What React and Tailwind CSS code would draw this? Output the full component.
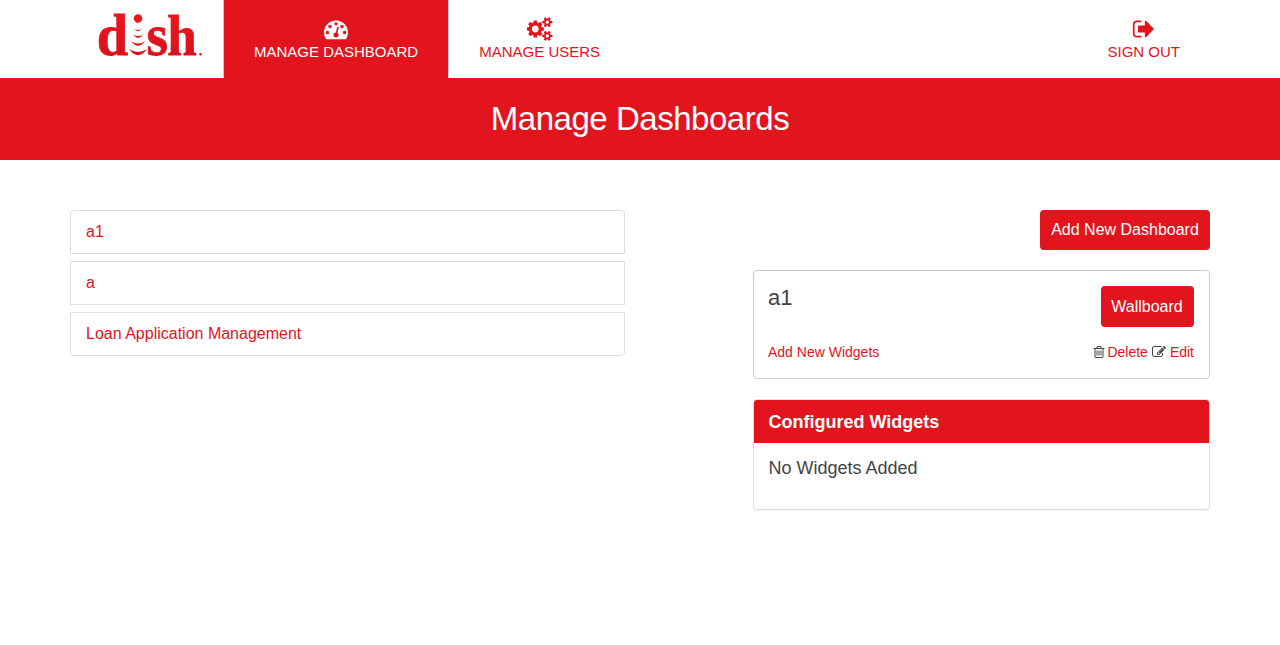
const PATHS = {
  tachometer:
    "M384 1152q0-53-37.5-90.5t-90.5-37.5-90.5 37.5-37.5 90.5 37.5 90.5 90.5 37.5 90.5-37.5 37.5-90.5zm192-448q0-53-37.5-90.5t-90.5-37.5-90.5 37.5-37.5 90.5 37.5 90.5 90.5 37.5 90.5-37.5 37.5-90.5zm428 481l101-382q6-26-7.5-48.5t-38.5-29.5-48 6.5-30 39.5l-101 382q-60 5-107 43.5t-63 98.5q-20 77 20 146t117 89 146-20 89-117q16-60-6-117t-72-91zm660-33q0-53-37.5-90.5t-90.5-37.5-90.5 37.5-37.5 90.5 37.5 90.5 90.5 37.5 90.5-37.5 37.5-90.5zm-640-640q0-53-37.5-90.5t-90.5-37.5-90.5 37.5-37.5 90.5 37.5 90.5 90.5 37.5 90.5-37.5 37.5-90.5zm448 192q0-53-37.5-90.5t-90.5-37.5-90.5 37.5-37.5 90.5 37.5 90.5 90.5 37.5 90.5-37.5 37.5-90.5zm320 448q0 261-141 483-19 29-54 29h-1402q-35 0-54-29-141-221-141-483 0-182 71-348t191-286 286-191 348-71 348 71 286 191 191 286 71 348z",
  cogs:
    "M832 896q0-106-75-181t-181-75-181 75-75 181 75 181 181 75 181-75 75-181zm768 512q0-52-38-90t-90-38-90 38-38 90q0 53 37.5 90.5t90.5 37.5 90.5-37.5 37.5-90.5zm0-1024q0-52-38-90t-90-38-90 38-38 90q0 53 37.5 90.5t90.5 37.5 90.5-37.5 37.5-90.5zm-384 421v185q0 10-7 19.5t-16 10.5l-155 24q-11 35-32 76 34 48 90 115 7 11 7 20 0 12-7 19-23 30-82.5 89.5t-78.5 59.5q-11 0-21-7l-115-90q-37 19-77 31-11 108-23 155-7 24-30 24h-186q-11 0-20-7.5t-10-17.5l-23-153q-34-10-75-31l-118 89q-7 7-20 7-11 0-21-8-144-133-144-160 0-9 7-19 10-14 41-53t47-61q-23-44-35-82l-152-24q-10-1-17-9.5t-7-19.5v-185q0-10 7-19.5t16-10.5l155-24q11-35 32-76-34-48-90-115-7-11-7-20 0-12 7-20 22-30 82-89t79-59q11 0 21 7l115 90q34-18 77-32 11-108 23-154 7-24 30-24h186q11 0 20 7.5t10 17.5l23 153q34 10 75 31l118-89q8-7 20-7 11 0 21 8 144 133 144 160 0 8-7 19-12 16-42 54t-45 60q23 48 34 82l152 23q10 2 17 10.5t7 19.5zm640 533v140q0 16-149 31-12 27-30 52 51 113 51 138 0 4-4 7-122 71-124 71-8 0-46-47t-52-68q-20 2-30 2t-30-2q-14 21-52 68t-46 47q-2 0-124-71-4-3-4-7 0-25 51-138-18-25-30-52-149-15-149-31v-140q0-16 149-31 13-29 30-52-51-113-51-138 0-4 4-7 4-2 35-20t59-34 30-16q8 0 46 46.5t52 67.5q20-2 30-2t30 2q51-71 92-112l6-2q4 0 124 70 4 3 4 7 0 25-51 138 17 23 30 52 149 15 149 31zm0-1024v140q0 16-149 31-12 27-30 52 51 113 51 138 0 4-4 7-122 71-124 71-8 0-46-47t-52-68q-20 2-30 2t-30-2q-14 21-52 68t-46 47q-2 0-124-71-4-3-4-7 0-25 51-138-18-25-30-52-149-15-149-31v-140q0-16 149-31 13-29 30-52-51-113-51-138 0-4 4-7 4-2 35-20t59-34 30-16q8 0 46 46.5t52 67.5q20-2 30-2t30 2q51-71 92-112l6-2q4 0 124 70 4 3 4 7 0 25-51 138 17 23 30 52 149 15 149 31z",
  signOut:
    "M704 1440q0 4 1 20t.5 26.5-3 23.5-10 19.5-20.5 6.5h-320q-119 0-203.5-84.5t-84.5-203.5v-704q0-119 84.5-203.5t203.5-84.5h320q13 0 22.5 9.5t9.5 22.5q0 4 1 20t.5 26.5-3 23.5-10 19.5-20.5 6.5h-320q-66 0-113 47t-47 113v704q0 66 47 113t113 47h312l11.5 1 11.5 3 8 5.5 7 9 2 13.5zm928-544q0 26-19 45l-544 544q-19 19-45 19t-45-19-19-45v-288h-448q-26 0-45-19t-19-45v-384q0-26 19-45t45-19h448v-288q0-26 19-45t45-19 45 19l544 544q19 19 19 45z",
  trash:
    "M704 736v576q0 14-9 23t-23 9h-64q-14 0-23-9t-9-23v-576q0-14 9-23t23-9h64q14 0 23 9t9 23zm256 0v576q0 14-9 23t-23 9h-64q-14 0-23-9t-9-23v-576q0-14 9-23t23-9h64q14 0 23 9t9 23zm256 0v576q0 14-9 23t-23 9h-64q-14 0-23-9t-9-23v-576q0-14 9-23t23-9h64q14 0 23 9t9 23zm128 724v-948h-896v948q0 22 7 40.5t14.5 27 10.5 8.5h832q3 0 10.5-8.5t14.5-27 7-40.5zm-672-1076h448l-48-117q-7-9-17-11h-317q-10 2-17 11zm928 32v64q0 14-9 23t-23 9h-96v948q0 83-47 143.5t-113 60.5h-832q-66 0-113-58.5t-47-141.5v-952h-96q-14 0-23-9t-9-23v-64q0-14 9-23t23-9h309l70-167q15-37 54-63t79-26h320q40 0 79 26t54 63l70 167h309q14 0 23 9t9 23z",
  edit:
    "M888 1184l116-116-152-152-116 116v56h96v96h56zm440-720q-16-16-33 1l-350 350q-17 17-1 33t33-1l350-350q17-17 1-33zm80 594v190q0 119-84.5 203.5t-203.5 84.5h-832q-119 0-203.5-84.5t-84.5-203.5v-832q0-119 84.5-203.5t203.5-84.5h832q63 0 117 25 15 7 18 23 3 17-9 29l-49 49q-14 14-32 8-23-6-45-6h-832q-66 0-113 47t-47 113v832q0 66 47 113t113 47h832q66 0 113-47t47-113v-126q0-13 9-22l64-64q15-15 35-7t20 29zm-96-738l288 288-672 672h-288v-288zm444 132l-92 92-288-288 92-92q28-28 68-28t68 28l152 152q28 28 28 68t-28 68z",
};

function Icon({ name, viewBox = "0 0 1792 1792", className }) {
  return (
    <svg viewBox={viewBox} fill="currentColor" className={className} aria-hidden="true">
      <path d={PATHS[name]} />
    </svg>
  );
}

function Logo() {
  return (
    <svg viewBox="0 0 106 46" className="h-[46px] w-[106px] overflow-visible" aria-label="dish">
      <defs>
        <linearGradient id="logoRed" gradientUnits="userSpaceOnUse" x1="0" y1="2" x2="0" y2="45">
          <stop offset="0" stopColor="#f0141e" />
          <stop offset="1" stopColor="#d2141e" />
        </linearGradient>
      </defs>
      <g fill="url(#logoRed)" className="font-['Liberation_Serif',serif] font-bold">
        <g stroke="#e2141e" strokeWidth="0.8">
          <text x="-1.3" y="43.2" fontSize="60" textLength="31.5" lengthAdjust="spacingAndGlyphs">d</text>
          <text x="48.5" y="43.2" fontSize="60" textLength="21.5" lengthAdjust="spacingAndGlyphs">s</text>
          <text x="69.2" y="43.2" fontSize="57" textLength="29.5" lengthAdjust="spacingAndGlyphs">h</text>
        </g>
        <circle cx="40" cy="6.5" r="4.2" />
        <path d="M36.5 17Q40 19 43.5 17Q40 21.5 36.500 17Z" />
        <path d="M35 22.5Q40 25.5 45 22.5Q40 29.5 35 22.5Z" />
        <path d="M33 29Q40 34 47 29Q40 38.5 33 29Z" />
        <path d="M31 37Q40 43 49 37Q40 49.500 31 37Z" />
        <circle cx="102.5" cy="42.3" r="1.2" />
      </g>
    </svg>
  );
}

function NavItem({ icon, label, active, viewBox, iconClass }) {
  return (
    <a
      className={
        active
          ? "flex h-[78px] flex-col items-center border-x border-[#ccc] bg-[#e2141e] px-[30px] pt-[16.5px] text-white"
          : "flex h-[78px] flex-col items-center px-[30px] pt-[16.5px] text-[#e2141e]"
      }
    >
      <Icon name={icon} viewBox={viewBox} className={iconClass} />
      <span className="mt-[1.5px] text-[15px] leading-5 whitespace-nowrap">{label}</span>
    </a>
  );
}

const dashboards = ["a1", "a", "Loan Application Management"];

export default function App() {
  return (
    <div className="min-h-[645px] bg-white font-['Liberation_Sans',Arial,sans-serif] text-[#444]">
      <header className="mx-auto flex h-[78px] w-[1140px]">
        <div className="w-[153px] shrink-0 pt-3 pl-7">
          <Logo />
        </div>
        <NavItem icon="tachometer" label="MANAGE DASHBOARD" active iconClass="h-6 w-6" />
        <NavItem icon="cogs" label="MANAGE USERS" viewBox="0 0 1856 1792" iconClass="h-6 w-[26px]" />
        <div className="ml-auto">
          <NavItem icon="signOut" label="SIGN OUT" iconClass="h-6 w-6" />
        </div>
      </header>

      <div className="flex h-[82px] items-center justify-center bg-[#e2141e]">
        <h1 className="text-[33px] leading-9 tracking-[-0.47px] text-white">Manage Dashboards</h1>
      </div>

      <main className="mx-auto flex w-[1140px] items-start justify-between pt-[50px]">
        <ul className="flex w-[555px] flex-col gap-[7px]">
          {dashboards.map((name) => (
            <li
              key={name}
              className="h-11 border border-[#ddd] px-[15px] py-2.5 text-base leading-[22px] text-[#e2141e] first:rounded-t last:rounded-b"
            >
              {name}
            </li>
          ))}
        </ul>

        <div className="flex w-[457px] flex-col">
          <button className="h-10 w-[170px] self-end rounded bg-[#e2141e] pb-px text-base text-white">
            Add New Dashboard
          </button>

          <section className="mt-5 h-[109px] rounded border border-[#ccc] pt-[15px] pr-[15px] pl-3.5">
            <div className="flex items-start justify-between">
              <h2 className="text-[22px] leading-6">a1</h2>
              <button className="h-[41px] w-[93px] rounded bg-[#e2141e] pr-px text-base text-white">Wallboard</button>
            </div>
            <div className="mt-[15px] flex justify-between text-sm leading-5 text-[#e2141e]">
              <a>Add New Widgets</a>
              <div className="flex items-center">
                <Icon name="trash" className="mr-[1.5px] h-3.5 w-3.5 text-[#444]" />
                <a>Delete</a>
                <Icon name="edit" className="mr-1 ml-1 h-3.5 w-3.5 text-[#444]" />
                <a>Edit</a>
              </div>
            </div>
          </section>

          <section className="mt-5 h-[111px] overflow-hidden rounded border border-[#ddd] shadow-[0_1px_1px_rgba(0,0,0,0.05)]">
            <h3 className="h-[43px] bg-[#e2141e] px-[14.5px] text-lg leading-[45px] font-bold text-white">
              Configured Widgets
            </h3>
            <p className="px-[14.5px] pt-[14px] text-lg leading-[22px]">No Widgets Added</p>
          </section>
        </div>
      </main>
    </div>
  );
}
